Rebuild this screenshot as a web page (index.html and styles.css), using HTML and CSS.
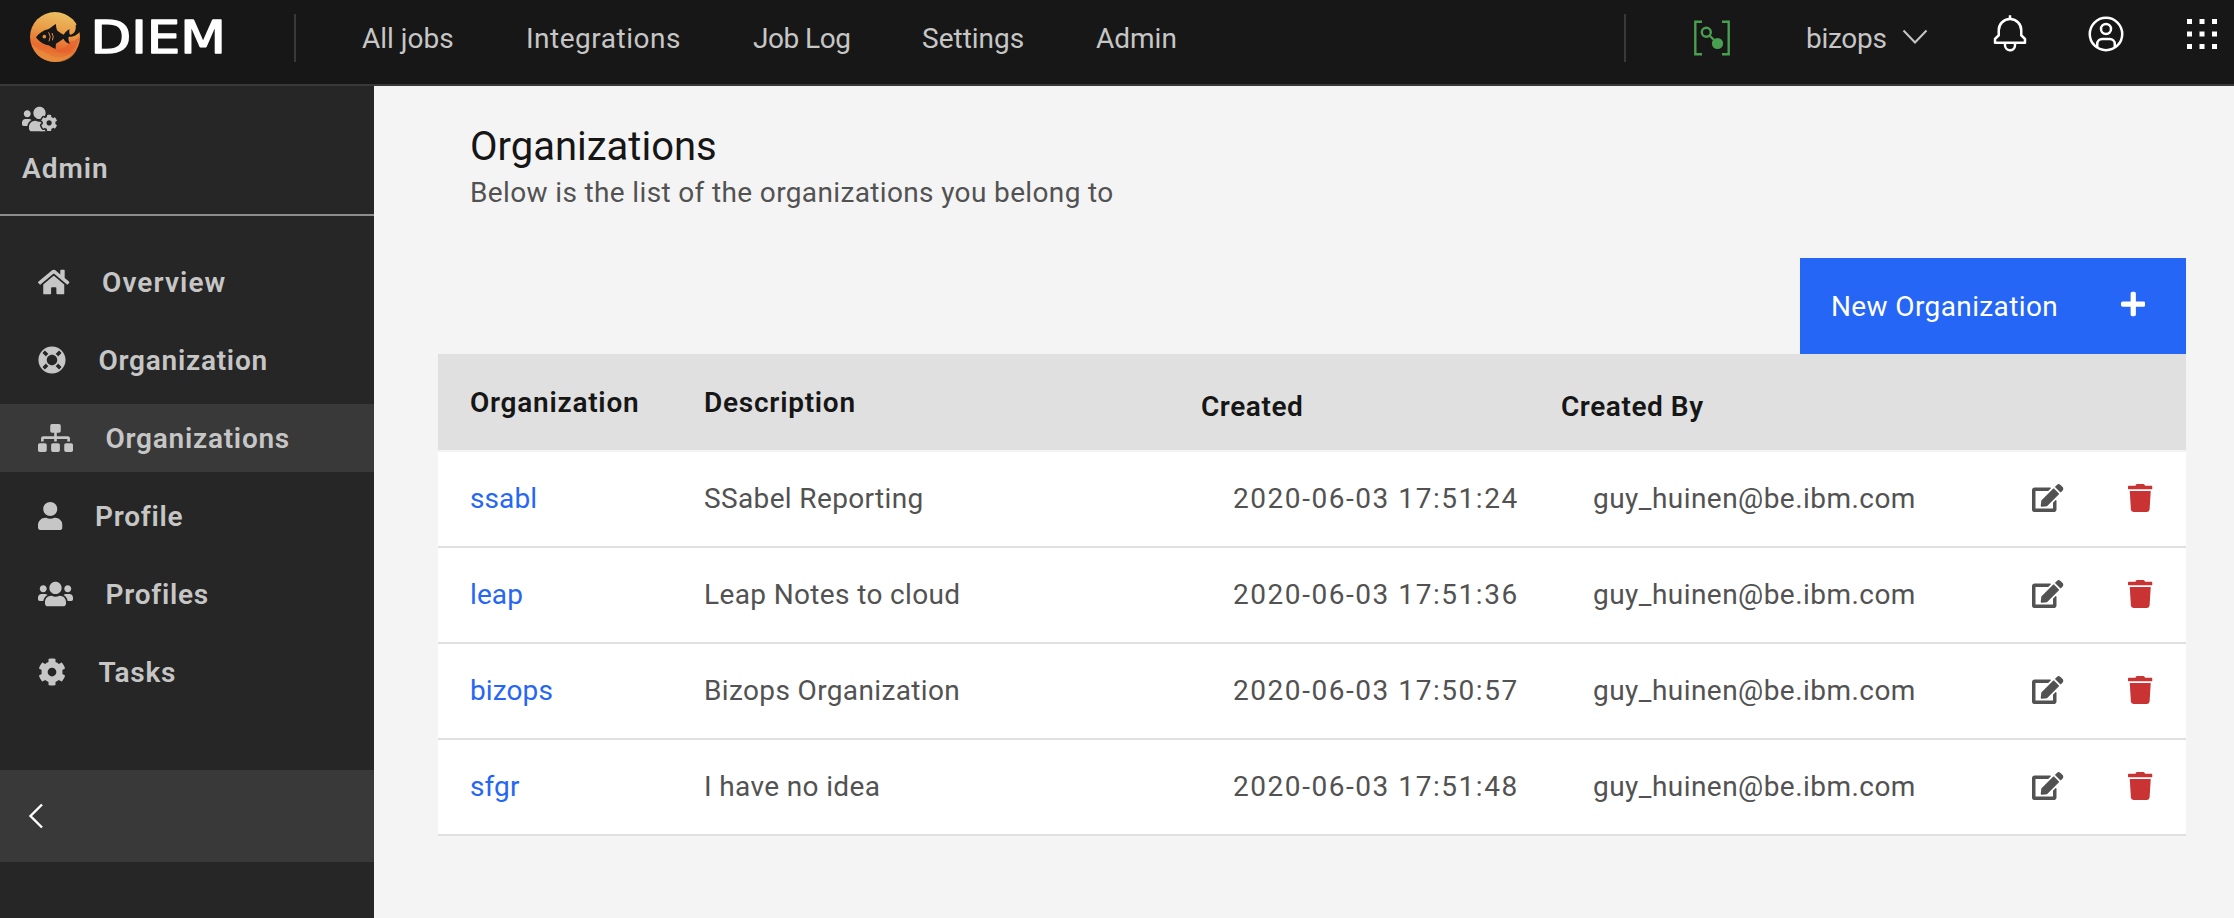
FILE: index.html
```html
<!DOCTYPE html>
<html lang="en">
<head>
<meta charset="utf-8">
<title>DIEM - Organizations</title>
<link rel="stylesheet" href="styles.css">
</head>
<body>
<svg class="sprite" aria-hidden="true">
  <defs>
    <symbol id="i-home" viewBox="0 0 576 512"><path d="M280.37 148.26L96 300.11V464a16 16 0 0 0 16 16l112.06-.29a16 16 0 0 0 15.92-16V368a16 16 0 0 1 16-16h64a16 16 0 0 1 16 16v95.64a16 16 0 0 0 16 16.05L464 480a16 16 0 0 0 16-16V300L295.67 148.26a12.19 12.19 0 0 0-15.3 0zM571.6 251.47L488 182.56V44.05a12 12 0 0 0-12-12h-56a12 12 0 0 0-12 12v72.61L318.47 43a48 48 0 0 0-61 0L4.34 251.47a12 12 0 0 0-1.6 16.9l25.5 31A12 12 0 0 0 45.15 301l235.22-193.74a12.19 12.19 0 0 1 15.3 0L530.9 301a12 12 0 0 0 16.9-1.6l25.5-31a12 12 0 0 0-1.7-16.93z"/></symbol>
    <symbol id="i-ring" viewBox="0 0 512 512"><path d="M256 8C119.033 8 8 119.033 8 256s111.033 248 248 248 248-111.033 248-248S392.967 8 256 8zm173.696 119.559l-63.399 63.399c-10.987-18.559-26.67-34.252-45.255-45.255l63.399-63.399a218.396 218.396 0 0 1 45.255 45.255zM256 352c-53.019 0-96-42.981-96-96s42.981-96 96-96 96 42.981 96 96-42.981 96-96 96zM127.559 82.304l63.399 63.399c-18.559 10.987-34.252 26.67-45.255 45.255l-63.399-63.399a218.372 218.372 0 0 1 45.255-45.255zM82.304 384.441l63.399-63.399c10.987 18.559 26.67 34.252 45.255 45.255l-63.399 63.399a218.396 218.396 0 0 1-45.255-45.255zm302.137 45.255l-63.399-63.399c18.559-10.987 34.252-26.67 45.255-45.255l63.399 63.399a218.403 218.403 0 0 1-45.255 45.255z"/></symbol>
    <symbol id="i-sitemap" viewBox="0 0 640 512"><path d="M128 352H32c-17.67 0-32 14.33-32 32v96c0 17.67 14.33 32 32 32h96c17.67 0 32-14.33 32-32v-96c0-17.67-14.33-32-32-32zm-24-80h192v48h48v-48h192v48h48v-57.59c0-21.17-17.23-38.41-38.41-38.41H344v-64h40c17.67 0 32-14.33 32-32V32c0-17.67-14.33-32-32-32H256c-17.67 0-32 14.33-32 32v96c0 17.67 14.33 32 32 32h40v64H94.41C73.23 224 56 241.23 56 262.41V320h48v-48zm264 80h-96c-17.67 0-32 14.33-32 32v96c0 17.67 14.33 32 32 32h96c17.67 0 32-14.33 32-32v-96c0-17.67-14.33-32-32-32zm240 0h-96c-17.67 0-32 14.33-32 32v96c0 17.67 14.33 32 32 32h96c17.67 0 32-14.33 32-32v-96c0-17.67-14.33-32-32-32z"/></symbol>
    <symbol id="i-user" viewBox="0 0 448 512"><path d="M224 256c70.7 0 128-57.3 128-128S294.7 0 224 0 96 57.3 96 128s57.3 128 128 128zm89.6 32h-16.7c-22.2 10.2-46.9 16-72.9 16s-50.6-5.8-72.9-16h-16.7C60.2 288 0 348.2 0 422.4V464c0 26.5 21.5 48 48 48h352c26.5 0 48-21.5 48-48v-41.6c0-74.2-60.2-134.4-134.4-134.4z"/></symbol>
    <symbol id="i-users" viewBox="0 0 640 512"><path d="M96 224c35.3 0 64-28.7 64-64s-28.7-64-64-64-64 28.7-64 64 28.7 64 64 64zm448 0c35.3 0 64-28.7 64-64s-28.7-64-64-64-64 28.7-64 64 28.7 64 64 64zm32 32h-64c-17.6 0-33.5 7.1-45.1 18.6 40.3 22.1 68.9 62 75.1 109.4h66c17.7 0 32-14.3 32-32v-32c0-35.3-28.7-64-64-64zm-256 0c61.9 0 112-50.1 112-112S381.9 32 320 32 208 82.1 208 144s50.1 112 112 112zm76.8 32h-8.3c-20.8 10-43.9 16-68.5 16s-47.6-6-68.5-16h-8.3C179.6 288 128 339.6 128 403.2V432c0 26.5 21.5 48 48 48h288c26.5 0 48-21.5 48-48v-28.8c0-63.6-51.6-115.2-115.2-115.2zm-223.7-13.4C161.5 263.1 145.6 256 128 256H64c-35.3 0-64 28.7-64 64v32c0 17.7 14.3 32 32 32h65.9c6.3-47.4 34.9-87.3 75.2-109.4z"/></symbol>
    <symbol id="i-cog" viewBox="0 0 512 512"><path id="p-cog" d="M487.4 315.7l-42.6-24.6c4.3-23.2 4.3-47 0-70.2l42.6-24.6c4.9-2.8 7.1-8.6 5.5-14-11.1-35.6-30-67.8-54.7-94.6-3.8-4.1-10-5.1-14.8-2.3L380.8 110c-17.9-15.4-38.5-27.3-60.8-35.1V25.8c0-5.6-3.9-10.5-9.4-11.7-36.7-8.2-74.3-7.8-109.2 0-5.5 1.2-9.4 6.1-9.4 11.7V75c-22.2 7.9-42.8 19.8-60.8 35.1L88.7 85.5c-4.9-2.8-11-1.9-14.8 2.3-24.7 26.7-43.6 58.9-54.7 94.6-1.7 5.4.6 11.2 5.5 14L67.3 221c-4.3 23.2-4.3 47 0 70.2l-42.6 24.6c-4.9 2.8-7.1 8.6-5.5 14 11.1 35.6 30 67.8 54.7 94.6 3.8 4.1 10 5.1 14.8 2.3l42.6-24.6c17.9 15.4 38.5 27.3 60.8 35.1v49.2c0 5.6 3.9 10.5 9.4 11.7 36.7 8.2 74.3 7.8 109.2 0 5.5-1.2 9.4-6.1 9.4-11.7v-49.2c22.2-7.9 42.8-19.8 60.8-35.1l42.6 24.6c4.9 2.8 11 1.9 14.8-2.3 24.7-26.7 43.6-58.9 54.7-94.6 1.5-5.5-.7-11.3-5.6-14.1zM256 336c-44.1 0-80-35.9-80-80s35.9-80 80-80 80 35.9 80 80-35.9 80-80 80z"/></symbol>
    <symbol id="i-edit" viewBox="0 0 576 512"><path d="M402.6 83.2l90.2 90.2c3.8 3.8 3.8 10 0 13.8L274.4 405.6l-92.8 10.3c-12.4 1.4-22.9-9.1-21.5-21.5l10.3-92.8L388.8 83.2c3.8-3.8 10-3.8 13.8 0zm162-22.9l-48.8-48.8c-15.2-15.2-39.9-15.2-55.2 0l-35.4 35.4c-3.8 3.8-3.8 10 0 13.8l90.2 90.2c3.8 3.8 10 3.8 13.8 0l35.4-35.4c15.2-15.3 15.2-40 0-55.2zM384 346.2V448H64V128h229.8c3.2 0 6.2-1.3 8.5-3.5l40-40c7.6-7.6 2.2-20.5-8.5-20.5H48C21.5 64 0 85.5 0 112v352c0 26.5 21.5 48 48 48h352c26.5 0 48-21.5 48-48V306.2c0-10.7-12.9-16-20.5-8.5l-40 40c-2.2 2.3-3.5 5.3-3.5 8.5z"/></symbol>
    <symbol id="i-trash" viewBox="0 0 448 512"><path d="M432 32H312l-9.4-18.7A24 24 0 0 0 281.1 0H166.8a23.72 23.72 0 0 0-21.4 13.3L136 32H16A16 16 0 0 0 0 48v32a16 16 0 0 0 16 16h416a16 16 0 0 0 16-16V48a16 16 0 0 0-16-16zM53.2 467a48 48 0 0 0 47.9 45h245.8a48 48 0 0 0 47.9-45L416 128H32z"/></symbol>
    <symbol id="i-plus" viewBox="0 0 448 512"><path d="M416 208H272V64c0-17.67-14.33-32-32-32h-32c-17.67 0-32 14.33-32 32v144H32c-17.67 0-32 14.33-32 32v32c0 17.67 14.33 32 32 32h144v144c0 17.67 14.33 32 32 32h32c17.67 0 32-14.33 32-32V304h144c17.67 0 32-14.33 32-32v-32c0-17.67-14.33-32-32-32z"/></symbol>
  </defs>
</svg>

<header class="header">
  <a class="logo">
    <svg width="200" height="56" viewBox="0 0 200 56">
      <defs>
        <linearGradient id="sun" x1="0.6" y1="0" x2="0.4" y2="1">
          <stop offset="0" stop-color="#ecc063"/>
          <stop offset=".4" stop-color="#e99a45"/>
          <stop offset=".72" stop-color="#e8692f"/>
          <stop offset="1" stop-color="#e48a3a"/>
        </linearGradient>
      </defs>
      <g transform="translate(-10 -6) scale(.33333)">
        <circle cx="105" cy="111" r="75" fill="url(#sun)"/>
        <path d="M34 128C50 150 66 150 84 162C110 180 150 172 172 144C160 180 120 194 84 183C56 174 38 152 34 128Z" fill="#e9913f" opacity=".55"/>
        <path d="M96 146C124 152 144 140 150 122C162 126 172 118 179 106C180 130 160 158 130 158C114 158 104 154 96 146Z" fill="#e65f2d" opacity=".7"/>
        <path d="M48 112C56 100 70 91 84 88C92 84 99 76 108 72C108 80 109 86 112 92C120 98 126 102 131 104C136 96 142 90 149 88C147 96 148 101 150 104C162 104 169 92 167 76L190 60L182 92C172 106 158 111 146 110C144 116 146 124 150 131C142 130 134 124 130 116C122 122 114 127 108 131C107 137 107 142 107 147C99 144 92 140 86 136C70 134 56 124 48 112Z" fill="#171717"/>
        <circle cx="73" cy="110" r="5.500" fill="#e98a42"/>
        <path d="M86 97Q95 110 87 124M96 99Q103 110 97 121" fill="none" stroke="#e98a42" stroke-width="3"/>
      </g>
      <text class="logo-name" x="60.500" y="47" textLength="135.500" lengthAdjust="spacingAndGlyphs">DIEM</text>
    </svg>
  </a>
  <span class="divider"></span>
  <nav class="menu">
    <a>All jobs</a><a>Integrations</a><a>Job Log</a><a>Settings</a><a>Admin</a>
  </nav>
  <div class="tools">
    <span class="divider"></span>
    <svg class="status" viewBox="0 0 36 36">
      <g fill="none" stroke="#4a9e4f" stroke-width="2.400">
        <path d="M8 1.700H1.300V34.300H8M28 1.700H34.700V34.300H28"/>
        <circle cx="12.300" cy="12.300" r="4.500"/><path d="M15.500 15.500L20 20"/>
      </g>
      <circle cx="23.500" cy="23.500" r="5.600" fill="#4a9e4f"/>
    </svg>
    <a class="org-switch">bizops
      <svg width="26" height="16" viewBox="0 0 26 16"><path d="M1.500 1.500L13 13.500L24.500 1.500" fill="none" stroke="#c6c6c6" stroke-width="2"/></svg>
    </a>
    <svg class="tool" viewBox="0 0 32 32"><path d="M28.7071,19.293,26,16.5859V13a10.0136,10.0136,0,0,0-9-9.9492V1H15V3.0508A10.0136,10.0136,0,0,0,6,13v3.5859L3.2929,19.293A1,1,0,0,0,3,20v3a1,1,0,0,0,1,1h7v.7768a5.152,5.152,0,0,0,4.5,5.1987A5.0057,5.0057,0,0,0,21,25V24h7a1,1,0,0,0,1-1V20A1,1,0,0,0,28.7071,19.293ZM19,25a3,3,0,0,1-6,0V24h6Zm8-3H5V20.4141L7.707,17.707A1,1,0,0,0,8,17V13a8,8,0,0,1,16,0v4a1,1,0,0,0,.293.707L27,20.4141Z"/></svg>
    <svg class="tool" viewBox="0 0 32 32"><g fill="none" stroke="#fff" stroke-width="2"><circle cx="16" cy="16" r="13"/><circle cx="16" cy="12" r="4"/><path d="M9 26.500V24A4 4 0 0 1 13 20H19A4 4 0 0 1 23 24V26.500"/></g></svg>
    <svg class="tool" viewBox="0 0 32 32"><path d="M4 4h4v4h-4zM14 4h4v4h-4zM24 4h4v4h-4zM4 14h4v4h-4zM14 14h4v4h-4zM24 14h4v4h-4zM4 24h4v4h-4zM14 24h4v4h-4zM24 24h4v4h-4z"/></svg>
  </div>
</header>

<div class="layout">
  <aside class="sidebar">
    <div class="side-head">
      <svg class="w640" viewBox="0 0 640 512">
        <mask id="cut"><rect width="640" height="512" fill="#fff"/><g transform="translate(342.400 174.400) scale(.6)"><use href="#p-cog" fill="#000" stroke="#000" stroke-width="90"/><circle cx="256" cy="256" r="150"/></g></mask>
        <g mask="url(#cut)"><path d="M96 224c35.300 0 64-28.700 64-64s-28.700-64-64-64-64 28.700-64 64 28.700 64 64 64zM320 256c61.900 0 112-50.100 112-112S381.900 32 320 32 208 82.100 208 144s50.100 112 112 112zm76.800 32h-8.300c-20.800 10-43.900 16-68.500 16s-47.600-6-68.500-16h-8.300C179.600 288 128 339.600 128 403.200V432c0 26.500 21.500 48 48 48h200l40-60v-130zm-223.700-13.400C161.500 263.100 145.600 256 128 256H64c-35.300 0-64 28.700-64 64v32c0 17.700 14.300 32 32 32h65.900c6.300-47.400 34.900-87.300 75.200-109.400z"/><path d="M340 440h70c4 16 14 28 26 40h-96z"/></g>
        <use href="#p-cog" transform="translate(342.400 174.400) scale(.6)"/>
      </svg>
      <span>Admin</span>
    </div>
    <nav class="side-nav">
      <a><svg class="w576"><use href="#i-home"/></svg>Overview</a>
      <a><svg class="w512"><use href="#i-ring"/></svg>Organization</a>
      <a class="active"><svg class="w640"><use href="#i-sitemap"/></svg>Organizations</a>
      <a><svg class="w448"><use href="#i-user"/></svg>Profile</a>
      <a><svg class="w640"><use href="#i-users"/></svg>Profiles</a>
      <a><svg class="w512"><use href="#i-cog"/></svg>Tasks</a>
    </nav>
    <div class="collapse"><svg width="16" height="26" viewBox="0 0 16 26"><path d="M14 1.500L2.500 13L14 24.500" fill="none" stroke="#fff" stroke-width="2.400"/></svg></div>
  </aside>

  <main class="content">
    <h1>Organizations</h1>
    <p class="lead">Below is the list of the organizations you belong to</p>
    <button class="new-btn">New Organization<svg class="w448"><use href="#i-plus"/></svg></button>
    <div class="table">
      <div class="row head"><span>Organization</span><span>Description</span><span class="low">Created</span><span class="low">Created By</span></div>
      <div class="row"><a>ssabl</a><span>SSabel Reporting</span><span class="date">2020-06-03 17:51:24</span><span class="mail">guy_huinen@be.ibm.com</span><svg class="w576"><use href="#i-edit"/></svg><svg class="w448 trash"><use href="#i-trash"/></svg></div>
      <div class="row"><a>leap</a><span>Leap Notes to cloud</span><span class="date">2020-06-03 17:51:36</span><span class="mail">guy_huinen@be.ibm.com</span><svg class="w576"><use href="#i-edit"/></svg><svg class="w448 trash"><use href="#i-trash"/></svg></div>
      <div class="row"><a>bizops</a><span>Bizops Organization</span><span class="date">2020-06-03 17:50:57</span><span class="mail">guy_huinen@be.ibm.com</span><svg class="w576"><use href="#i-edit"/></svg><svg class="w448 trash"><use href="#i-trash"/></svg></div>
      <div class="row"><a>sfgr</a><span>I have no idea</span><span class="date">2020-06-03 17:51:48</span><span class="mail">guy_huinen@be.ibm.com</span><svg class="w576"><use href="#i-edit"/></svg><svg class="w448 trash"><use href="#i-trash"/></svg></div>
    </div>
  </main>
</div>
</body>
</html>
```

FILE: styles.css
```css
* { box-sizing: border-box; }
body {
  margin: 0;
  height: 918px;
  display: flex;
  flex-direction: column;
  overflow: hidden;
  background: #f4f4f4;
  color: #525252;
  font: 400 28px/40px Roboto, "Noto Sans", sans-serif;
  letter-spacing: .36px;
}
svg { display: block; flex: none; fill: currentColor; }
.sprite { display: none; }
.w448 { width: 24.5px; height: 28px; }
.w512 { width: 28px; height: 28px; }
.w576 { width: 31.5px; height: 28px; }
.w640 { width: 35px; height: 28px; }

/* top bar */
.header {
  display: flex;
  align-items: flex-start;
  height: 86px;
  background: #171717;
  border-bottom: 2px solid #393939;
  color: #c6c6c6;
  line-height: 77px;
}
.logo { width: 264px; margin-left: 30px; padding-top: 6px; }
.logo-name {
  font: 44.5px "DejaVu Sans", sans-serif;
  letter-spacing: 0;
  fill: #fff;
  stroke: #fff;
  stroke-width: 1.5;
  stroke-linejoin: round;
}
.divider { width: 2px; height: 48px; margin-top: 14px; background: #393939; flex: none; }
.menu {
  display: grid;
  grid-template-columns: 164px 227px 169px 174px 160px;
  margin-left: 66px;
  letter-spacing: 0;
}
.menu a:nth-child(2) { letter-spacing: .5px; }
.menu a:nth-child(3) { letter-spacing: -.5px; }
.tools { display: flex; align-items: flex-start; margin-left: auto; padding-right: 12px; }
.status { width: 36px; height: 36px; margin: 20px 76px 0 68px; }
.org-switch { display: flex; width: 184px; letter-spacing: -.3px; }
.org-switch svg { margin: 29px 0 0 15px; }
.tool { width: 40px; height: 40px; margin-top: 14px; color: #fff; }
.tool + .tool { margin-left: 56px; }

/* side bar */
.layout { display: flex; flex: 1; }
.sidebar {
  width: 374px;
  flex: none;
  background: #262626;
  color: #c6c6c6;
  font-weight: 600;
  letter-spacing: .75px;
}
.side-head {
  height: 130px;
  padding: 19px 22px 0;
  border-bottom: 2px solid #8d8d8d;
}
.side-head span { display: block; margin-top: 16px; letter-spacing: 1px; }
.side-nav { display: flex; flex-direction: column; gap: 10px; padding: 32px 0 64px; }
.side-nav a { display: flex; align-items: center; gap: 32.5px; height: 68px; padding: 2px 0 0 38px; }
.side-nav a:first-child { letter-spacing: 1.1px; }
.side-nav svg { margin-top: -3px; }
.active, .collapse { background: #393939; }
.collapse { display: flex; align-items: center; height: 92px; padding-left: 28px; }

/* content */
.content { flex: 1; display: flex; flex-direction: column; padding: 37px 48px 0 64px; }
h1 {
  margin: 0 0 2px 32px;
  color: #161616;
  font-size: 40px;
  font-weight: 400;
  line-height: 48px;
  letter-spacing: 0;
}
.lead { margin: 0 0 45px 32px; }
.new-btn {
  display: flex;
  align-items: center;
  justify-content: space-between;
  align-self: flex-end;
  width: 386px;
  height: 96px;
  padding: 2px 41px 0 31px;
  border: 0;
  background: #2566f6;
  color: #fff;
  font: inherit;
  letter-spacing: .38px;
}
.new-btn svg { margin-top: -7px; }
.row {
  display: grid;
  grid-template-columns: 234px 497px 360px 471px 96px 58px;
  align-items: center;
  height: 96px;
  padding: 0 0 2px 32px;
  background: #fff;
  border-bottom: 2px solid #e0e0e0;
}
.row a, .row span { padding-top: 2px; }
.row a { color: #2566f6; letter-spacing: .1px; }
.row.head {
  height: 98px;
  padding-bottom: 0;
  background: #e0e0e0;
  border-bottom-color: #f4f4f4;
  color: #161616;
  font-weight: 600;
  letter-spacing: .75px;
}
.row .low { padding-top: 10px; letter-spacing: .55px; }
.row .date { padding-left: 32px; letter-spacing: 1.55px; }
.row .mail { padding-left: 32px; letter-spacing: .46px; }
.trash { color: #c93333; }
```
